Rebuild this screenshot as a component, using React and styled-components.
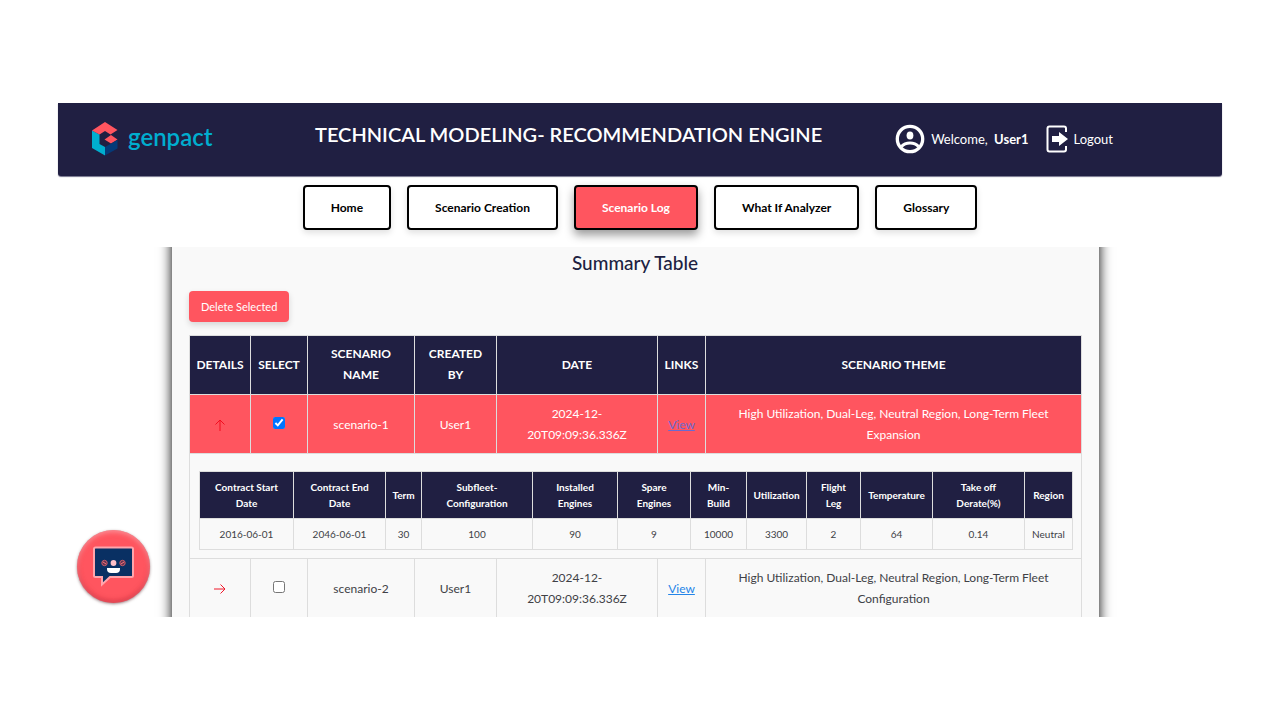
import React, { useState } from "react";
import styled, { createGlobalStyle, css } from "styled-components";

const navy = "#201f42";
const coral = "#ff555f";
const line = "#dddddd";

const GlobalStyle = createGlobalStyle`
  *, *::before, *::after { box-sizing: border-box; }
  body {
    margin: 0;
    background: #ffffff;
    color: #404146;
    font-family: Lato, "Open Sans", sans-serif;
    font-size: 13px;
  }
  button, input { font-family: inherit; }
`;

const Page = styled.div`
  height: 100vh;
  padding: 103px 58px;
  display: flex;
  flex-direction: column;
`;

const Header = styled.header`
  flex: none;
  display: grid;
  grid-template-columns: 223px 1fr auto;
  align-items: center;
  padding: 0 109px 2px 34px;
  min-height: 73px;
  background: ${navy};
  border-radius: 0 0 3px 3px;
  box-shadow: 0 1px 1px rgba(20, 16, 60, 0.6);
  color: #ffffff;
`;

const Brand = styled.a`
  display: flex;
  align-items: center;
  gap: 10px;
  color: #00aecf;
  font-size: 24px;
  font-weight: 600;
  line-height: 28px;
  text-decoration: none;
`;

const Wordmark = styled.span`
  padding-bottom: 4px;
`;

const Title = styled.h1`
  margin: 0;
  padding-bottom: 9px;
  font-size: 20px;
  font-weight: 600;
  line-height: 28px;
  white-space: nowrap;
`;

const Account = styled.div`
  display: flex;
  align-items: center;
  gap: 17px;
  line-height: 20px;
`;

const AccountItem = styled.div`
  display: flex;
  align-items: center;
  gap: 6px;

  strong { margin-left: 3px; }
`;

const LogoutLink = styled.a`
  display: flex;
  align-items: center;
  gap: 5px;
  color: inherit;
  text-decoration: none;
`;

const Nav = styled.nav`
  flex: none;
  display: flex;
  justify-content: center;
  gap: 16px;
  padding: 9px 0 17px;
`;

const NavButton = styled.button`
  height: 45px;
  padding: 0 26px;
  border: 2px solid #000000;
  border-radius: 4px;
  background: #ffffff;
  color: #000000;
  font-size: 12px;
  font-weight: 700;
  box-shadow: 0 3px 6px rgba(0, 0, 0, 0.12);

  ${({ $active }) => $active && css`
    background: ${coral};
    color: #ffffff;
    box-shadow: 0 5px 10px rgba(0, 0, 0, 0.4);
  `}
`;

const Viewport = styled.main`
  flex: 1;
  min-height: 0;
  overflow: hidden;
  padding: 0 123px 0 114px;
`;

const Panel = styled.section`
  margin-top: -30px;
  padding: 30px 18px 40px 17px;
  background: #f9f9f9;
  box-shadow: 0 0 12px #000000;
`;

const PanelTitle = styled.h2`
  margin: 0 0 12px;
  color: ${navy};
  font-size: 19px;
  font-weight: 500;
  line-height: 32px;
  text-align: center;
`;

const DeleteButton = styled.button`
  display: block;
  height: 31px;
  margin-bottom: 13px;
  padding: 0 12px;
  border: 0;
  border-radius: 4px;
  background: ${coral};
  color: #ffffff;
  font-size: 11px;
  box-shadow: 0 3px 6px rgba(0, 0, 0, 0.14);
`;

const SummaryTable = styled.table`
  width: 100%;
  table-layout: fixed;
  border-collapse: collapse;
  text-align: center;
  line-height: 21px;
`;

const HeadCell = styled.th`
  height: 59px;
  padding: 2px 6px 4px;
  border: 1px solid ${line};
  background: ${navy};
  color: #ffffff;
  font-size: 12px;
  font-weight: 700;
`;

const Row = styled.tr`
  ${({ $selected }) => $selected && css`
    background: ${coral};
    color: #ffffff;
  `}
`;

const Cell = styled.td`
  height: 59px;
  padding: 3px 15px;
  border: 1px solid ${line};
  font-size: 12px;
`;

const TightCell = styled(Cell)`
  padding: 3px 4px;
`;

const ToggleButton = styled.button`
  display: inline-flex;
  padding: 0;
  border: 0;
  background: none;
  color: ${({ $open }) => ($open ? "#f20d1f" : "#f0182b")};
  vertical-align: middle;
`;

const Check = styled.input`
  width: 12px;
  height: 12px;
  margin: 0;
  accent-color: #0075ff;
`;

const ViewLink = styled.a`
  color: ${({ $selected }) => ($selected ? "#6a6ad0" : "#2585e8")};
  text-decoration: underline;
`;

const DetailCell = styled.td`
  padding: 17px 9px 8px;
  border: 1px solid ${line};
`;

const DetailTable = styled(SummaryTable)`
  line-height: 16px;

  th, td {
    border: 1px solid ${line};
    padding: 0;
    font-size: 10px;
  }
  th {
    height: 47px;
    background: ${navy};
    color: #ffffff;
    font-weight: 700;
  }
  td {
    height: 31px;
  }
`;

const ChatButton = styled.button`
  position: absolute;
  left: 77px;
  bottom: 117px;
  width: 73px;
  height: 73px;
  padding: 0;
  border: 0;
  border-radius: 50%;
  background: ${coral};
  box-shadow: 0 1px 3px rgba(60, 0, 10, 0.5), inset 0 2px 5px rgba(255, 190, 195, 0.6),
    inset 0 -2px 5px rgba(170, 20, 40, 0.5);

  svg { display: block; }
`;

const LogoMark = () => (
  <svg width="26" height="34" viewBox="0 0 26 34" aria-hidden="true">
    <path d="M0 8.500 7.500 12.500V22L13 25V33.500L0 26Z" fill="#00aecf" />
    <path d="M0 8.500 13 0 25.500 8 18.500 12.500 13 9 7.500 12.500Z" fill="#ff555f" />
    <path d="M12.500 17.500 19 13 25.500 17.500 19 21.500Z" fill="#ff555f" />
    <path d="M13 25 25.500 18V26.500L13 33.500Z" fill="#053a78" />
  </svg>
);

const UserIcon = () => (
  <svg width="30" height="30" viewBox="0 0 30 30" fill="none" aria-hidden="true">
    <circle cx="15" cy="15" r="12.700" stroke="#fff" strokeWidth="3.300" />
    <ellipse cx="15" cy="11.500" rx="3.400" ry="4.100" fill="#fff" />
    <path d="M6.500 22.500C10.500 17.800 19.500 17.800 23.500 22.500" stroke="#fff" strokeWidth="3" />
  </svg>
);

const LogoutIcon = () => (
  <svg width="23" height="28" viewBox="0 0 23 28" fill="none" aria-hidden="true">
    <path
      d="M20 7V3.500Q20 1.500 18 1.500H3.500Q1.500 1.500 1.500 3.500V24.500Q1.500 26.500 3.500 26.500H18Q20 26.500 20 24.500V21"
      stroke="#fff"
      strokeWidth="2"
    />
    <path d="M6 11H13V7L22 14 13 21V17H6Z" fill="#fff" />
  </svg>
);

const Arrow = ({ up }) => (
  <svg width="12" height="12" viewBox="0 0 12 12" fill="none" stroke="currentColor" aria-hidden="true">
    {up ? <path d="M6 12V1M1.500 5.500 6 1 10.500 5.500" /> : <path d="M0 6H11M6.500 1.500 11 6 6.500 10.500" />}
  </svg>
);

const ChatBot = () => (
  <svg width="73" height="73" viewBox="0 0 73 73" aria-hidden="true">
    <path
      d="M18.500 17.500H54.500Q56 17.500 56 19V45.500Q56 47 54.500 47H33L25 54.500V47H18.500Q17 47 17 45.500V19Q17 17.500 18.500 17.500Z"
      fill="#093063"
      stroke="#ffa4ab"
      strokeWidth="2"
    />
    <circle cx="27.500" cy="33" r="2.700" fill="#63334f" stroke="#c95c69" />
    <circle cx="45.500" cy="33" r="2.700" fill="#63334f" stroke="#c95c69" />
    <path d="M26 32 29 34M44 34 47 32" stroke="#ff7780" />
    <circle cx="36.500" cy="33" r="2.900" fill="#ffc1c9" />
    <path d="M30 38H43V39Q43 43 39 43H34Q30 43 30 39Z" fill="#fff" />
  </svg>
);

const navItems = ["Home", "Scenario Creation", "Scenario Log", "What If Analyzer", "Glossary"];

const summaryColumns = [
  ["DETAILS", 61],
  ["SELECT", 57],
  ["SCENARIO NAME", 107],
  ["CREATED BY", 82],
  ["DATE", 161],
  ["LINKS", 48],
  ["SCENARIO THEME", 376],
];

const detailColumns = [
  [["Contract Start", "Date"], 94, "2016-06-01"],
  [["Contract End", "Date"], 92, "2046-06-01"],
  [["Term"], 36, "30"],
  [["Subfleet-", "Configuration"], 111, "100"],
  [["Installed", "Engines"], 85, "90"],
  [["Spare", "Engines"], 73, "9"],
  [["Min-", "Build"], 56, "10000"],
  [["Utilization"], 60, "3300"],
  [["Flight", "Leg"], 54, "2"],
  [["Temperature"], 72, "64"],
  [["Take off", "Derate(%)"], 92, "0.14"],
  [["Region"], 48, "Neutral"],
];

const scenarios = [
  {
    name: "scenario-1",
    user: "User1",
    date: "2024-12-20T09:09:36.336Z",
    theme: "High Utilization, Dual-Leg, Neutral Region, Long-Term Fleet Expansion",
  },
  {
    name: "scenario-2",
    user: "User1",
    date: "2024-12-20T09:09:36.336Z",
    theme: "High Utilization, Dual-Leg, Neutral Region, Long-Term Fleet Configuration",
  },
];

const ScenarioDetails = () => (
  <tr>
    <DetailCell colSpan={summaryColumns.length}>
      <DetailTable>
        <colgroup>
          {detailColumns.map(([label, width]) => <col key={label.join(" ")} width={width} />)}
        </colgroup>
        <thead>
          <tr>
            {detailColumns.map(([label]) => (
              <th key={label.join(" ")} scope="col">
                {label[0]}
                {label[1] && <><br />{label[1]}</>}
              </th>
            ))}
          </tr>
        </thead>
        <tbody>
          <tr>
            {detailColumns.map(([label, , value]) => <td key={label.join(" ")}>{value}</td>)}
          </tr>
        </tbody>
      </DetailTable>
    </DetailCell>
  </tr>
);

export default function App() {
  const [selected, setSelected] = useState(["scenario-1"]);
  const [open, setOpen] = useState("scenario-1");

  const toggleSelected = (name) =>
    setSelected((list) => (list.includes(name) ? list.filter((n) => n !== name) : [...list, name]));

  return (
    <Page>
      <GlobalStyle />
      <Header>
        <Brand href="#home">
          <LogoMark />
          <Wordmark>genpact</Wordmark>
        </Brand>
        <Title>TECHNICAL MODELING- RECOMMENDATION ENGINE</Title>
        <Account>
          <AccountItem>
            <UserIcon />
            <span>Welcome, <strong>User1</strong></span>
          </AccountItem>
          <LogoutLink href="#logout">
            <LogoutIcon />
            Logout
          </LogoutLink>
        </Account>
      </Header>

      <Nav>
        {navItems.map((item) => (
          <NavButton key={item} type="button" $active={item === "Scenario Log"}>{item}</NavButton>
        ))}
      </Nav>

      <Viewport>
        <Panel>
          <PanelTitle>Summary Table</PanelTitle>
          <DeleteButton type="button">Delete Selected</DeleteButton>
          <SummaryTable>
            <colgroup>
              {summaryColumns.map(([label, width]) => <col key={label} width={width} />)}
            </colgroup>
            <thead>
              <tr>
                {summaryColumns.map(([label]) => <HeadCell key={label} scope="col">{label}</HeadCell>)}
              </tr>
            </thead>
            <tbody>
              {scenarios.map(({ name, user, date, theme }) => {
                const isSelected = selected.includes(name);
                const isOpen = open === name;
                return (
                  <React.Fragment key={name}>
                    <Row $selected={isSelected}>
                      <TightCell>
                        <ToggleButton
                          type="button"
                          $open={isOpen}
                          aria-label={`Details of ${name}`}
                          onClick={() => setOpen(isOpen ? null : name)}
                        >
                          <Arrow up={isOpen} />
                        </ToggleButton>
                      </TightCell>
                      <TightCell>
                        <Check
                          type="checkbox"
                          aria-label={`Select ${name}`}
                          checked={isSelected}
                          onChange={() => toggleSelected(name)}
                        />
                      </TightCell>
                      <TightCell>{name}</TightCell>
                      <TightCell>{user}</TightCell>
                      <Cell>{date}</Cell>
                      <TightCell><ViewLink href={`#${name}`} $selected={isSelected}>View</ViewLink></TightCell>
                      <Cell>{theme}</Cell>
                    </Row>
                    {isOpen && <ScenarioDetails />}
                  </React.Fragment>
                );
              })}
            </tbody>
          </SummaryTable>
        </Panel>
      </Viewport>

      <ChatButton type="button" aria-label="Open chat assistant">
        <ChatBot />
      </ChatButton>
    </Page>
  );
}
